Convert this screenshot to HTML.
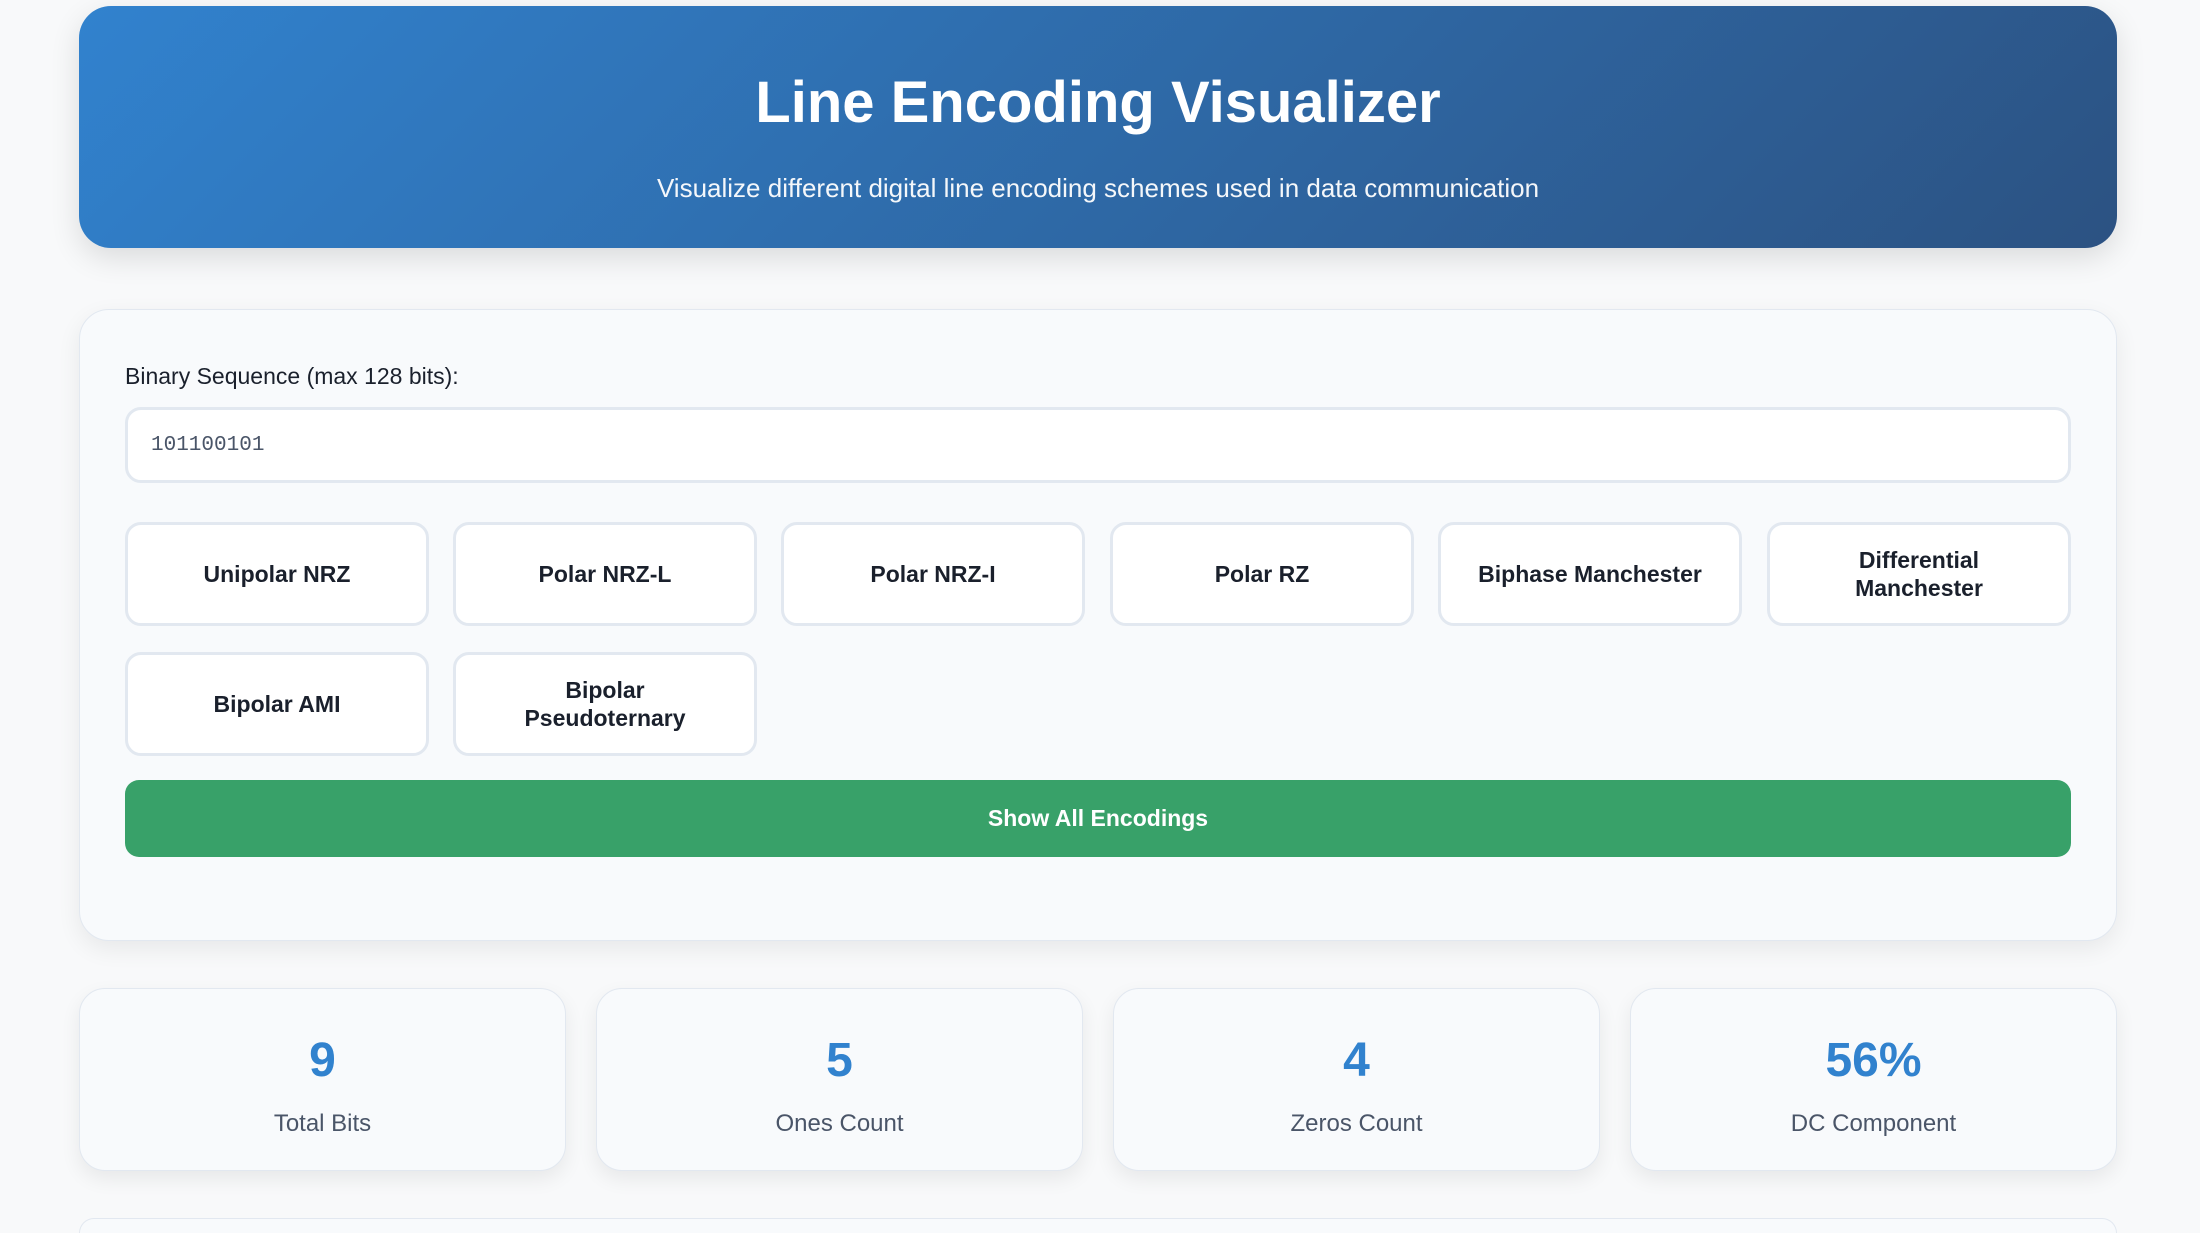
<!DOCTYPE html>
<html><head><meta charset="utf-8"><style>
*{box-sizing:border-box;margin:0;padding:0}
html,body{width:2200px;height:1233px;overflow:hidden;background:#f8f9fa;font-family:"Liberation Sans",sans-serif}
.header{position:absolute;left:79px;top:6px;width:2038px;height:242px;border-radius:32px;background:linear-gradient(135deg,#3182ce 0%,#2c5282 100%);box-shadow:0 10px 30px rgba(0,0,0,0.12);color:#fff;text-align:center}
.header h1{position:absolute;left:0;right:0;top:68px;font-size:58px;font-weight:bold;line-height:1}
.header p{position:absolute;left:0;right:0;top:169px;font-size:26px;line-height:1;opacity:.95}
.card{position:absolute;left:79px;top:309px;width:2038px;height:632px;background:#f8fafc;border:1.5px solid #e2e8f0;border-radius:30px;box-shadow:0 8px 24px rgba(0,0,0,0.07)}
.label{position:absolute;left:125px;top:363px;font-size:23px;color:#1a202c}
.input{position:absolute;left:125px;top:407px;width:1946px;height:76px;background:#fff;border:3px solid #e2e8f0;border-radius:16px;font-family:"Liberation Mono",monospace;font-size:21px;color:#4a5568;padding:24px 0 0 23px}
.btn{position:absolute;width:304px;height:104px;background:#fff;border:3px solid #e2e8f0;border-radius:16px;display:flex;align-items:center;justify-content:center;text-align:center;font-weight:bold;font-size:23px;line-height:28px;color:#1a202c}
.show{position:absolute;left:125px;top:780px;width:1946px;height:77px;background:#38a169;border-radius:14px;color:#fff;font-weight:bold;font-size:23px;display:flex;align-items:center;justify-content:center}
.stat{position:absolute;top:988px;width:487px;height:183px;background:#f8fafc;border:1.5px solid #e2e8f0;border-radius:26px;box-shadow:0 8px 20px rgba(0,0,0,0.07);text-align:center}
.stat .n{position:absolute;left:0;right:0;top:48px;font-size:48px;font-weight:bold;color:#3182ce;line-height:1}
.stat .l{position:absolute;left:0;right:0;top:123px;font-size:24px;color:#4a5568;line-height:1}
.next{position:absolute;left:79px;top:1218px;width:2038px;height:15px;background:#f8fafc;border:1.5px solid #e2e8f0;border-bottom:none;border-radius:30px 30px 0 0}
</style></head><body>
<div class="header"><h1>Line Encoding Visualizer</h1><p>Visualize different digital line encoding schemes used in data communication</p></div>
<div class="card"></div>
<div class="label">Binary Sequence (max 128 bits):</div>
<div class="input">101100101</div>
<div class="btn" style="left:125px;top:522px">Unipolar NRZ</div>
<div class="btn" style="left:453px;top:522px">Polar NRZ-L</div>
<div class="btn" style="left:781px;top:522px">Polar NRZ-I</div>
<div class="btn" style="left:1110px;top:522px">Polar RZ</div>
<div class="btn" style="left:1438px;top:522px">Biphase Manchester</div>
<div class="btn" style="left:1767px;top:522px">Differential<br>Manchester</div>
<div class="btn" style="left:125px;top:652px">Bipolar AMI</div>
<div class="btn" style="left:453px;top:652px">Bipolar<br>Pseudoternary</div>
<div class="show">Show All Encodings</div>
<div class="stat" style="left:79px"><div class="n">9</div><div class="l">Total Bits</div></div>
<div class="stat" style="left:596px"><div class="n">5</div><div class="l">Ones Count</div></div>
<div class="stat" style="left:1113px"><div class="n">4</div><div class="l">Zeros Count</div></div>
<div class="stat" style="left:1630px"><div class="n">56%</div><div class="l">DC Component</div></div>
<div class="next"></div>
</body></html>
